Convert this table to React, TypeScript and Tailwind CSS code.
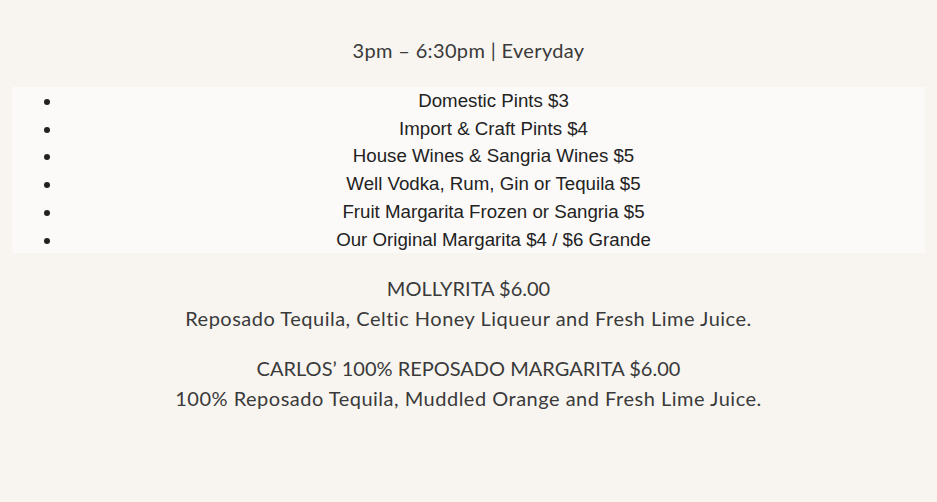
const items = [
  'Domestic Pints $3',
  'Import & Craft Pints $4',
  'House Wines & Sangria Wines $5',
  'Well Vodka, Rum, Gin or Tequila $5',
  'Fruit Margarita Frozen or Sangria $5',
  'Our Original Margarita $4 / $6 Grande',
];

const specials = [
  { name: 'MOLLYRITA $6.00', desc: 'Reposado Tequila, Celtic Honey Liqueur and Fresh Lime Juice.' },
  { name: 'CARLOS’ 100% REPOSADO MARGARITA $6.00', desc: '100% Reposado Tequila, Muddled Orange and Fresh Lime Juice.' },
];

export default function App() {
  return (
    <div className="min-h-[502px] w-full bg-[#f8f5f1] pt-[35px] text-[#3a3a3a]">
      <p className="text-center font-['Lato',sans-serif] text-[20px] font-normal leading-[30px] tracking-[0.35px]">
        3pm – 6:30pm | Everyday
      </p>

      <ul className="mx-[12px] mt-[22px] list-disc bg-[#fcfaf8] pl-[50px] font-['Liberation_Sans',Arial,sans-serif] text-[18.7px] leading-[27.7px] text-[#222]">
        {items.map((item) => (
          <li key={item} className="text-center">{item}</li>
        ))}
      </ul>

      <div className="mt-[20px] flex flex-col gap-[20px] text-center font-['Lato',sans-serif] text-[20px] font-normal leading-[30px]">
        {specials.map((s) => (
          <div key={s.name}>
            <p>{s.name}</p>
            <p className="tracking-[0.5px]">{s.desc}</p>
          </div>
        ))}
      </div>
    </div>
  );
}
